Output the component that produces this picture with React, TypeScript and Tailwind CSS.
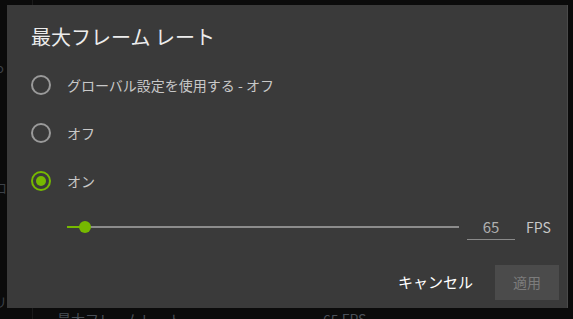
import { useState } from 'react'

const font = { fontFamily: '"Noto Sans CJK JP", "Noto Sans", sans-serif' }

type Choice = 'global' | 'off' | 'on'

export default function App() {
  const [choice, setChoice] = useState<Choice>('on')
  const [fps] = useState(65)
  const pct = 4.6 // thumb position along the track

  return (
    <div
      className="relative w-[573px] h-[319px] overflow-hidden bg-[#0b0b0b]"
      style={font}
    >
      {/* page behind the overlay */}
      <div className="absolute left-[32px] top-0 h-full w-px bg-[#1a1a1a]" />
      <span className="absolute left-[-4px] top-[58px] text-[13px] text-[#3c4148]">o</span>
      <span className="absolute left-[-6px] top-[178px] text-[13px] text-[#3c4148]">ロ</span>
      <span className="absolute left-[-6px] top-[292px] text-[13px] text-[#3c4148]">リ</span>
      <span className="absolute left-[57px] top-[309px] text-[14px] text-[#4a5058]">最大フレームレート</span>
      <span className="absolute left-[323px] top-[309px] text-[14px] text-[#4a5058]">65 FPS</span>

      <div className="relative pt-[5px] pl-[7px]">
        <div className="w-[560px] h-[303px] bg-[#3a3a3a] flex flex-col pl-[24px] pr-[8px] shadow-[1px_0_0_#4a4a4a]">
          <h2 className="mt-[18px] h-[28px] leading-[28px] text-[20px] text-[#ececec]">
            最大フレーム レート
          </h2>

          <div className="mt-[10px] flex flex-col">
            <RadioRow
              label="グローバル設定を使用する - オフ"
              checked={choice === 'global'}
              onSelect={() => setChoice('global')}
            />
            <RadioRow label="オフ" checked={choice === 'off'} onSelect={() => setChoice('off')} />
            <RadioRow label="オン" checked={choice === 'on'} onSelect={() => setChoice('on')} />
          </div>

          {/* FPS slider */}
          <div className="h-[44px] flex items-center pl-[36px]">
            <div className="relative w-[392px] h-[2px] bg-[#8c8c8c]">
              <div className="absolute left-0 top-0 h-[2px] bg-[#76b900]" style={{ width: `${pct}%` }} />
              <div
                className="absolute top-[-5px] w-[12px] h-[12px] -ml-[6px] rounded-full bg-[#76b900]"
                style={{ left: `${pct}%` }}
              />
            </div>
            <div className="ml-[8px] w-[48px] h-[26px] border-b border-[#8a8a8a] flex items-center justify-center text-[15px] text-[#b0b0b0] pt-[2px]">
              {fps}
            </div>
            <span className="ml-[11px] text-[14px] text-[#c8c8c8]">FPS</span>
          </div>

          <div className="mt-[16px] flex justify-end items-center">
            <button className="text-[15px] text-white mr-[22px]">キャンセル</button>
            <button className="w-[64px] h-[35px] bg-[#4b4b4b] text-[14px] text-[#7c7c7c]">適用</button>
          </div>
        </div>
      </div>
    </div>
  )
}

function RadioRow({
  label,
  checked,
  onSelect,
}: {
  label: string
  checked: boolean
  onSelect: () => void
}) {
  return (
    <div className="h-[48px] flex items-center gap-[16px] cursor-pointer" onClick={onSelect}>
      <div
        className={
          checked
            ? 'w-[20px] h-[20px] rounded-full border-2 border-[#76b900] flex items-center justify-center'
            : 'w-[20px] h-[20px] rounded-full border-2 border-[#9a9a9a]'
        }
      >
        {checked && <div className="w-[10px] h-[10px] rounded-full bg-[#76b900]" />}
      </div>
      <span className="text-[14px] text-[#c8c8c8]">{label}</span>
    </div>
  )
}
